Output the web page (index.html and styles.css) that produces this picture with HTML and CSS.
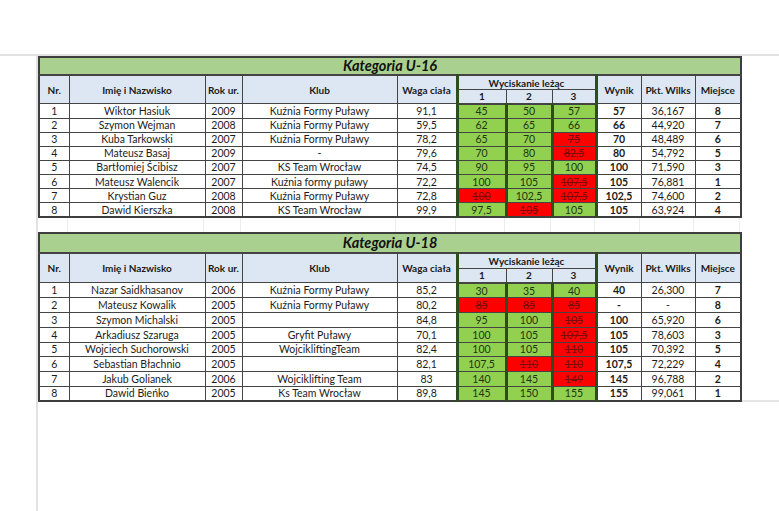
FILE: index.html
```html
<!DOCTYPE html>
<html lang="pl">
<head>
<meta charset="utf-8">
<title>Kategorie U-16 / U-18</title>
<link rel="stylesheet" href="styles.css">
</head>
<body>
<div class="sheet">
  <div class="gutter"></div>
  <div class="area">
    <table class="results t1">
      <colgroup>
        <col class="c-nr"><col class="c-name"><col class="c-year"><col class="c-club"><col class="c-weight">
        <col class="c-l1"><col class="c-l2"><col class="c-l3"><col class="c-res"><col class="c-wilks"><col class="c-place">
      </colgroup>
      <thead>
        <tr class="title"><th colspan="11">Kategoria U-16</th></tr>
        <tr class="head1">
          <th rowspan="2">Nr.</th><th rowspan="2">Imię i Nazwisko</th><th rowspan="2">Rok ur.</th><th rowspan="2">Klub</th><th rowspan="2">Waga ciała</th>
          <th colspan="3" class="lifthead">Wyciskanie leżąc</th>
          <th rowspan="2">Wynik</th><th rowspan="2">Pkt. Wilks</th><th rowspan="2">Miejsce</th>
        </tr>
        <tr class="head2"><th class="l l1">1</th><th class="l l2">2</th><th class="l l3">3</th></tr>
      </thead>
      <tbody>
        <tr><td>1</td><td>Wiktor Hasiuk</td><td>2009</td><td>Kuźnia Formy Puławy</td><td>91,1</td><td class="l l1 ok">45</td><td class="l l2 ok">50</td><td class="l l3 ok">57</td><td class="b">57</td><td>36,167</td><td class="b">8</td></tr>
        <tr><td>2</td><td>Szymon Wejman</td><td>2008</td><td>Kuźnia Formy Puławy</td><td>59,5</td><td class="l l1 ok">62</td><td class="l l2 ok">65</td><td class="l l3 ok">66</td><td class="b">66</td><td>44,920</td><td class="b">7</td></tr>
        <tr><td>3</td><td>Kuba Tarkowski</td><td>2007</td><td>Kuźnia Formy Puławy</td><td>78,2</td><td class="l l1 ok">65</td><td class="l l2 ok">70</td><td class="l l3 no">75</td><td class="b">70</td><td>48,489</td><td class="b">6</td></tr>
        <tr><td>4</td><td>Mateusz Basaj</td><td>2009</td><td>-</td><td>79,6</td><td class="l l1 ok">70</td><td class="l l2 ok">80</td><td class="l l3 no">82,5</td><td class="b">80</td><td>54,792</td><td class="b">5</td></tr>
        <tr><td>5</td><td>Bartłomiej Ścibisz</td><td>2007</td><td>KS Team Wrocław</td><td>74,5</td><td class="l l1 ok">90</td><td class="l l2 ok">95</td><td class="l l3 ok">100</td><td class="b">100</td><td>71,590</td><td class="b">3</td></tr>
        <tr><td>6</td><td>Mateusz Walencik</td><td>2007</td><td>Kuźnia formy puławy</td><td>72,2</td><td class="l l1 ok">100</td><td class="l l2 ok">105</td><td class="l l3 no">107,5</td><td class="b">105</td><td>76,881</td><td class="b">1</td></tr>
        <tr><td>7</td><td>Krystian Guz</td><td>2008</td><td>Kuźnia Formy Puławy</td><td>72,8</td><td class="l l1 no">100</td><td class="l l2 ok">102,5</td><td class="l l3 no">107,5</td><td class="b">102,5</td><td>74,600</td><td class="b">2</td></tr>
        <tr><td>8</td><td>Dawid Kierszka</td><td>2008</td><td>KS Team Wrocław</td><td>99,9</td><td class="l l1 ok">97,5</td><td class="l l2 no">105</td><td class="l l3 ok">105</td><td class="b">105</td><td>63,924</td><td class="b">4</td></tr>
      </tbody>
    </table>

    <div class="gap">
      <span></span><span></span><span></span><span></span><span></span><span></span><span></span><span></span><span></span><span></span><span></span>
    </div>

    <div class="row2">
      <table class="results t2">
        <colgroup>
          <col class="c-nr"><col class="c-name"><col class="c-year"><col class="c-club"><col class="c-weight">
          <col class="c-l1"><col class="c-l2"><col class="c-l3"><col class="c-res"><col class="c-wilks"><col class="c-place">
        </colgroup>
        <thead>
          <tr class="title"><th colspan="11">Kategoria U-18</th></tr>
          <tr class="head1">
            <th rowspan="2">Nr.</th><th rowspan="2">Imię i Nazwisko</th><th rowspan="2">Rok ur.</th><th rowspan="2">Klub</th><th rowspan="2">Waga ciała</th>
            <th colspan="3" class="lifthead">Wyciskanie leżąc</th>
            <th rowspan="2">Wynik</th><th rowspan="2">Pkt. Wilks</th><th rowspan="2">Miejsce</th>
          </tr>
          <tr class="head2"><th class="l l1">1</th><th class="l l2">2</th><th class="l l3">3</th></tr>
        </thead>
        <tbody>
          <tr><td>1</td><td>Nazar Saidkhasanov</td><td>2006</td><td>Kuźnia Formy Puławy</td><td>85,2</td><td class="l l1 ok">30</td><td class="l l2 ok">35</td><td class="l l3 ok">40</td><td class="b">40</td><td>26,300</td><td class="b">7</td></tr>
          <tr><td>2</td><td>Mateusz Kowalik</td><td>2005</td><td>Kuźnia Formy Puławy</td><td>80,2</td><td class="l l1 no">85</td><td class="l l2 no">85</td><td class="l l3 no">85</td><td class="b">-</td><td>-</td><td class="b">8</td></tr>
          <tr><td>3</td><td>Szymon Michalski</td><td>2005</td><td></td><td>84,8</td><td class="l l1 ok">95</td><td class="l l2 ok">100</td><td class="l l3 no">105</td><td class="b">100</td><td>65,920</td><td class="b">6</td></tr>
          <tr><td>4</td><td>Arkadiusz Szaruga</td><td>2005</td><td>Gryfit Puławy</td><td>70,1</td><td class="l l1 ok">100</td><td class="l l2 ok">105</td><td class="l l3 no">107,5</td><td class="b">105</td><td>78,603</td><td class="b">3</td></tr>
          <tr><td>5</td><td>Wojciech Suchorowski</td><td>2005</td><td>WojcikliftingTeam</td><td>82,4</td><td class="l l1 ok">100</td><td class="l l2 ok">105</td><td class="l l3 no">110</td><td class="b">105</td><td>70,392</td><td class="b">5</td></tr>
          <tr><td>6</td><td>Sebastian Błachnio</td><td>2005</td><td></td><td>82,1</td><td class="l l1 ok">107,5</td><td class="l l2 no">110</td><td class="l l3 no">110</td><td class="b">107,5</td><td>72,229</td><td class="b">4</td></tr>
          <tr><td>7</td><td>Jakub Golianek</td><td>2006</td><td>Wojciklifting Team</td><td>83</td><td class="l l1 ok">140</td><td class="l l2 ok">145</td><td class="l l3 no">149</td><td class="b">145</td><td>96,788</td><td class="b">2</td></tr>
          <tr><td>8</td><td>Dawid Bieńko</td><td>2005</td><td>Ks Team Wrocław</td><td>89,8</td><td class="l l1 ok">145</td><td class="l l2 ok">150</td><td class="l l3 ok">155</td><td class="b">155</td><td>99,061</td><td class="b">1</td></tr>
        </tbody>
      </table>
      <div class="tail"></div>
    </div>
  </div>
</div>
</body>
</html>
```

FILE: styles.css
```css
html, body {
  margin: 0;
  padding: 0;
  background: #ffffff;
}

body {
  font-family: "Lato", "Liberation Sans", sans-serif;
  color: #1c1c1c;
}

.sheet {
  margin-top: 54px;
  border-top: 2px solid #e2e2e2;
  display: flex;
  height: 455px;
}

.gutter {
  width: 36px;
  flex: none;
}

.area {
  flex: 1;
  border-left: 2px solid #e2e2e2;
  display: flex;
  flex-direction: column;
}

.results {
  width: 702px;
  table-layout: fixed;
  border-collapse: collapse;
  border: 2px solid #3e3e3e;
  flex: none;
}

.c-nr { width: 30px; }
.c-name { width: 136px; }
.c-year { width: 37px; }
.c-club { width: 155px; }
.c-weight { width: 60px; }
.c-l1 { width: 49px; }
.c-l2 { width: 46px; }
.c-l3 { width: 44px; }
.c-res { width: 45px; }
.c-wilks { width: 54px; }
.c-place { width: 46px; }

.results th,
.results td {
  padding: 0;
  text-align: center;
  vertical-align: middle;
  white-space: nowrap;
  overflow: hidden;
  border: 1px solid #444444;
}

.results td {
  font-size: 10.5px;
  line-height: 12px;
  height: 13.1px;
}

.t2 td {
  height: 13.7px;
}

.results .title th {
  background: #a9d08e;
  height: 16px;
  font-size: 14.5px;
  font-weight: bold;
  font-style: italic;
  line-height: 16px;
  color: #111;
  border-bottom: 2px solid #444444;
}

.t2 .title th {
  height: 17.5px;
}

.results .head1 th,
.results .head2 th {
  background: #dde7f3;
  font-size: 10px;
  font-weight: bold;
  color: #1a1a1a;
  line-height: 12px;
}

.results .head1 th {
  height: 13px;
}

.results .head2 th {
  height: 12.5px;
  border-bottom: 2px solid #444444;
}

.t2 .head1 th { height: 14px; }
.t2 .head2 th { height: 13px; }

.results .l1 { border-left: 3px solid #2e4d1c; }
.results .l3 { border-right: 3px solid #2e4d1c; }
.results td.l2,
.results th.l2 {
  border-left: 3px solid #2e4d1c;
  border-right: 3px solid #2e4d1c;
}

.results .head2 .l { border-left-color: #444444; border-right-color: #444444; border-left-width: 1px; border-right-width: 1px; }
.results .head2 .l1 { border-left: 3px solid #2e4d1c; }
.results .head2 .l3 { border-right: 3px solid #2e4d1c; }
.results .lifthead { border-left: 3px solid #2e4d1c; border-right: 3px solid #2e4d1c; }

.results td.ok {
  background: #92d050;
  color: #1f3510;
}

.results td.no {
  background: #ff0000;
  color: #7a0c0c;
  text-decoration: line-through;
}

.results td.b {
  font-weight: bold;
}

.gap {
  display: grid;
  grid-template-columns: 30px 136px 37px 155px 60px 49px 46px 44px 45px 54px 46px;
  width: 702px;
  height: 14px;
}

.gap span {
  border-right: 1px solid #ececec;
}

.row2 {
  display: flex;
  align-items: flex-end;
}

.tail {
  flex: 1;
  border-bottom: 2px solid #e6e6e6;
}
```
